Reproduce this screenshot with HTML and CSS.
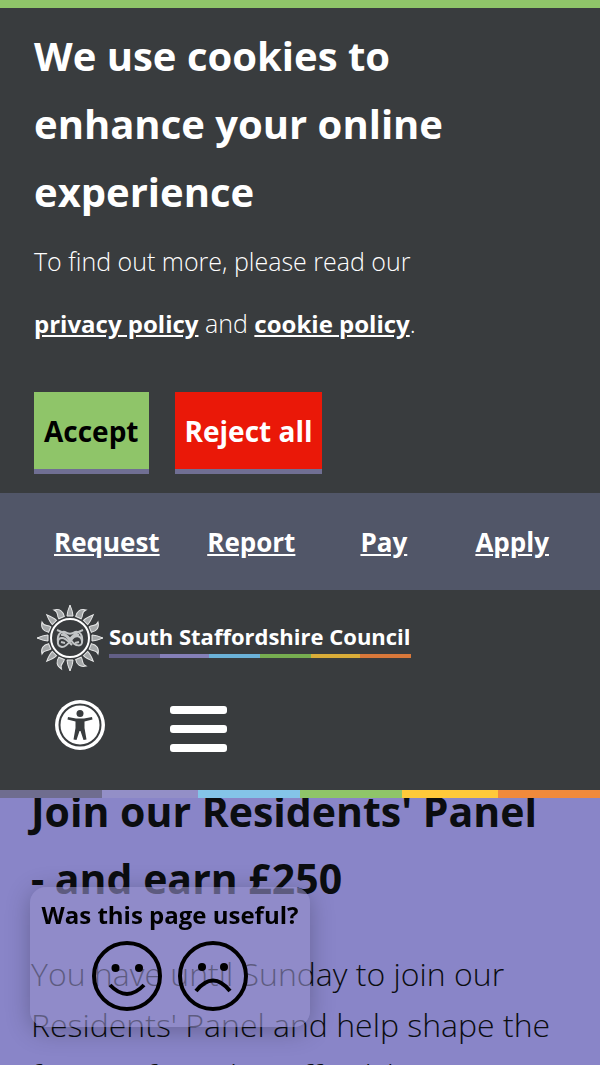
FILE: index.html
```html
<!DOCTYPE html>
<html lang="en">
<head>
    <meta charset="UTF-8">
    <meta name="viewport" content="width=device-width, initial-scale=1.0">
    <title>South Staffordshire Council</title>
    <link rel="stylesheet" href="styles.css">
</head>
<body>

<section class="cookie-banner">
    <h2>We use cookies to<br>enhance your online<br>experience</h2>
    <p>To find out more, please read our<br><a href="#privacy">privacy policy</a> and <a href="#cookies">cookie policy</a>.</p>
    <div class="cookie-buttons">
        <button type="button" class="accept">Accept</button>
        <button type="button" class="reject">Reject all</button>
    </div>
</section>

<nav class="quick-links">
    <a href="#request">Request</a>
    <a href="#report">Report</a>
    <a href="#pay">Pay</a>
    <a href="#apply">Apply</a>
</nav>

<header class="site-header">
    <a class="logo" href="#home">
        <svg class="logo-sun" viewBox="-34 -34 68 68" aria-hidden="true">
            <defs>
                <path id="ray" d="M-3 -22 Q-3 -26 0 -33 Q3 -26 3 -22 Z"/>
                <path id="flame" d="M-3 -22 C-4 -26 0 -28 -4 -32 C2 -31 4 -27 3 -22 Z"/>
            </defs>
            <g class="rays">
                <use href="#ray"/>
                <use href="#flame" transform="rotate(22.5) scale(-1 1)"/>
                <use href="#ray" transform="rotate(45)"/>
                <use href="#flame" transform="rotate(67.5)"/>
                <use href="#ray" transform="rotate(90)"/>
                <use href="#flame" transform="rotate(112.5) scale(-1 1)"/>
                <use href="#ray" transform="rotate(135)"/>
                <use href="#flame" transform="rotate(157.5)"/>
                <use href="#ray" transform="rotate(180)"/>
                <use href="#flame" transform="rotate(202.5)"/>
                <use href="#ray" transform="rotate(225)"/>
                <use href="#flame" transform="rotate(247.5)"/>
                <use href="#ray" transform="rotate(270)"/>
                <use href="#flame" transform="rotate(292.5) scale(-1 1)"/>
                <use href="#ray" transform="rotate(315)"/>
                <use href="#flame" transform="rotate(337.5)"/>
            </g>
            <circle class="ring" r="19"/>
            <g class="knot">
                <path d="M-13 -8 C-7 -6 -3 -3 1 2 C5 9 13 9 12 3 C11 -3 5 -3 2 1 C-1 5 -4 9 -8 9 C-14 8 -13 0 -8 0 C-4 0 -2 3 2 7"/>
                <path d="M13 -8 C7 -6 3 -3 -1 2 M-12 4 C-13 -3 -10 -7 -5 -6 C-2 -4 2 -4 5 -6 C10 -7 13 -3 12 4"/>
                <path d="M-9 -3 C-4 -4 -2 0 0 3 C2 0 4 -4 9 -3 M-9 4 L-5 5 M9 4 L5 5"/>
            </g>
        </svg>
        <span class="logo-name">South Staffordshire Council</span>
    </a>
    <div class="header-tools">
        <button type="button" aria-label="Accessibility options">
            <svg class="access-icon" viewBox="0 0 50 50">
                <circle class="disc" cx="25" cy="25" r="25"/>
                <circle class="inner" cx="25" cy="25" r="20.500"/>
                <circle cx="25" cy="13.500" r="3.500"/>
                <path d="M13 17 L21 18.500 H29 L37 17 L37.500 19.500 L29.500 21.500 V28 L31.500 39.500 L28.500 40 L25.500 31 H24.500 L21.500 40 L18.500 39.500 L20.500 28 V21.500 L12.500 19.500 Z"/>
            </svg>
        </button>
        <button type="button" class="menu-button" aria-label="Menu">
            <span></span>
            <span></span>
            <span></span>
        </button>
    </div>
</header>

<main class="promo">
    <h1>Join our Residents' Panel<br>- and earn £250</h1>
    <p>You have until Sunday to join our<br>Residents' Panel and help shape the<br>future of South Staffordshire.</p>
</main>

<aside class="feedback">
    <h2>Was this page useful?</h2>
    <div class="faces">
        <button type="button" aria-label="Yes">
            <svg viewBox="0 0 70 70">
                <circle class="line" cx="35" cy="35" r="33"/>
                <circle cx="23.500" cy="27" r="4"/>
                <circle cx="47" cy="27" r="4"/>
                <path class="line" d="M18 44 Q35 62 52 44"/>
            </svg>
        </button>
        <button type="button" aria-label="No">
            <svg viewBox="0 0 70 70">
                <circle class="line" cx="35" cy="35" r="33"/>
                <circle cx="24" cy="26" r="4"/>
                <circle cx="46" cy="26" r="4"/>
                <path class="line" d="M18 50 Q35 29 52 50"/>
            </svg>
        </button>
    </div>
</aside>

</body>
</html>
```
FILE: styles.css
```css
* {
    box-sizing: border-box;
}
body {
    margin: 0;
    height: 100vh;
    overflow: hidden;
    font-family: "Open Sans", sans-serif;
    background-color: #8985c8;
}
h1, h2, p {
    margin: 0;
}
button {
    padding: 0;
    border: 0;
    background: none;
    font-family: inherit;
    cursor: pointer;
}
svg {
    display: block;
}

/* Cookie banner */
.cookie-banner {
    padding: 14px 34px 19px;
    border-top: 8px solid #8fc569;
    background-color: #393c3e;
    color: #fff;
}
.cookie-banner h2 {
    font-size: 40px;
    line-height: 68px;
}
.cookie-banner p {
    margin-top: 4px;
    font-size: 25px;
    font-weight: 300;
    line-height: 62px;
}
.cookie-banner a {
    color: #fff;
    font-size: 24px;
    font-weight: 700;
}
.cookie-buttons {
    display: flex;
    gap: 26px;
    margin-top: 37px;
}
.cookie-buttons button {
    height: 82px;
    padding: 0 10px;
    border-bottom: 5px solid #706f93;
    font-size: 28px;
    font-weight: 700;
}
.accept {
    background-color: #8fc569;
    color: #000;
}
.reject {
    background-color: #ea1808;
    color: #fff;
}

/* Quick links */
.quick-links {
    display: grid;
    grid-template-columns: 4fr 4fr 3fr 2fr;
    padding: 25px 48px 24px 54px;
    background-color: #515668;
}
.quick-links a {
    color: #fff;
    font-size: 26px;
    font-weight: 700;
    line-height: 48px;
}

/* Header */
.site-header {
    padding: 14px 36px 38px;
    background-color: #393c3e;
    border-bottom: 8px solid;
    border-image: linear-gradient(to right, #6f6d8f 0 17%, #938fc7 17% 33%, #84c4e8 33% 50%, #8fc569 50% 67%, #ffc93a 67% 83%, #f18a3c 83%) 0 0 8;
}
.logo {
    display: flex;
    align-items: center;
    gap: 5px;
    color: #fff;
    text-decoration: none;
}
.logo-sun {
    width: 68px;
    height: 68px;
}
.rays {
    fill: #a5a8a9;
    stroke: #e6e7e7;
    stroke-width: 1;
}
.ring {
    fill: #393c3e;
    stroke: #fff;
    stroke-width: 2;
}
.knot {
    fill: none;
    stroke: #c2c5c6;
    stroke-width: 2;
}
.logo-name {
    padding: 5px 0;
    border-bottom: 4px solid;
    border-image: linear-gradient(to right, #625f86 0 17%, #8580b8 17% 33%, #6bb2d8 33% 50%, #76ad50 50% 67%, #d9ac38 67% 83%, #d9783a 83%) 0 0 4;
    font-size: 22px;
    font-weight: 700;
    line-height: 26px;
}
.header-tools {
    display: flex;
    gap: 65px;
    padding: 26px 19px 0;
}
.access-icon {
    width: 50px;
    height: 50px;
    fill: #393c3e;
}
.access-icon .disc {
    fill: #fff;
}
.access-icon .inner {
    fill: none;
    stroke: #393c3e;
    stroke-width: 2;
}
.menu-button {
    display: flex;
    flex-direction: column;
    justify-content: space-between;
    width: 57px;
    height: 46px;
    margin-top: 8px;
}
.menu-button span {
    width: 100%;
    height: 8px;
    border-radius: 3px;
    background-color: #fff;
}

/* Promo */
.promo {
    overflow: hidden;
    padding: 0 31px;
    color: #0b0d10;
}
.promo h1 {
    margin-top: -20px;
    font-size: 41px;
    line-height: 67px;
    white-space: nowrap;
}
.promo p {
    margin-top: 36px;
    font-size: 32px;
    font-weight: 300;
    line-height: 51px;
    white-space: nowrap;
}

/* Feedback box over the page */
.feedback {
    position: fixed;
    left: 30px;
    bottom: 38px;
    width: 280px;
    height: 140px;
    padding-top: 9px;
    border-radius: 16px;
    background-color: rgba(148, 144, 202, 0.6);
    box-shadow: 0 4px 24px rgba(0, 0, 0, 0.25);
    text-align: center;
}
.feedback h2 {
    font-size: 24px;
    line-height: 38px;
    white-space: nowrap;
}
.faces {
    display: flex;
    justify-content: center;
    gap: 16px;
    margin-top: 7px;
}
.faces svg {
    width: 70px;
    height: 70px;
}
.faces .line {
    fill: none;
    stroke: #000;
    stroke-width: 4;
}
```
